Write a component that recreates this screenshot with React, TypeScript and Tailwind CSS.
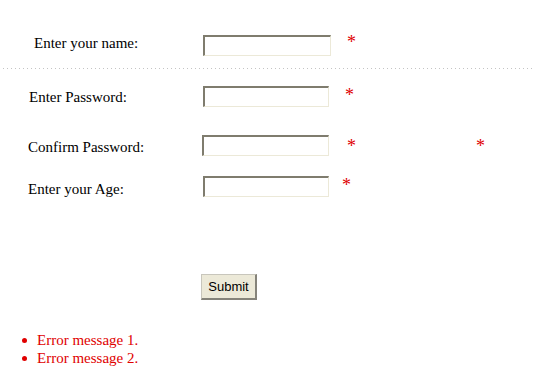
import React from 'react';

function Star({ className = '' }: { className?: string }) {
  return <span className={`text-[18px] leading-[15px] text-[#e00000] ${className}`}>*</span>;
}

function Field({ type = 'text' }: { type?: string }) {
  return (
    <input
      type={type}
      className="h-[21px] w-full border-t-2 border-l-2 border-r border-b border-t-[#7f7c6e] border-l-[#7f7c6e] border-r-[#ece9d8] border-b-[#ece9d8] bg-white outline-none"
    />
  );
}

const errors = ['Error message 1.', 'Error message 2.'];

export default function App() {
  return (
    <div className="w-[535px] h-[392px] bg-white text-black font-['Liberation_Serif','Times_New_Roman',serif] text-[15px]">
      <div className="pt-[35px]">
        {/* name */}
        <div className="flex items-start h-[21px]">
          <span className="w-[203px] pl-[34px] leading-[17px]">Enter your name:</span>
          <div className="w-[128px]">
            <Field />
          </div>
          <Star className="ml-[16px]" />
        </div>

        <div className="mt-[12px] h-px w-full bg-[linear-gradient(to_right,#c4c4c4_1px,transparent_1px)] bg-[length:4px_1px] bg-[position:3px_0]" />

        {/* password */}
        <div className="mt-[17px] flex items-start h-[21px]">
          <span className="w-[203px] pl-[29px] mt-[3px] leading-[17px]">Enter Password:</span>
          <div className="w-[126px]">
            <Field type="password" />
          </div>
          <Star className="ml-[16px] mt-[2px]" />
        </div>

        {/* confirm */}
        <div className="mt-[28px] flex items-start h-[21px]">
          <span className="w-[202px] pl-[28px] mt-[4px] leading-[17px]">Confirm Password:</span>
          <div className="w-[127px]">
            <Field type="password" />
          </div>
          <Star className="ml-[18px] mt-[4px]" />
          <Star className="ml-[120px] mt-[4px]" />
        </div>

        {/* age */}
        <div className="mt-[20px] flex items-start h-[21px]">
          <span className="w-[203px] pl-[28px] mt-[5px] leading-[17px]">Enter your Age:</span>
          <div className="w-[126px]">
            <Field />
          </div>
          <Star className="ml-[13px] mt-[2px]" />
        </div>

        <div className="mt-[77px] pl-[201px]">
          <button
            type="button"
            className="h-[26px] w-[56px] bg-[#ece9d8] border-t border-l border-b-2 border-r-2 border-t-[#c8c6bc] border-l-[#c8c6bc] border-b-[#85837a] border-r-[#85837a] font-['Liberation_Sans',Arial,sans-serif] text-[13px] leading-none text-black"
          >
            Submit
          </button>
        </div>

        <ul className="mt-[31px] text-[#e00000] leading-[18px]">
          {errors.map((msg) => (
            <li key={msg} className="flex items-center">
              <span className="ml-[22px] mr-[10px] mt-[1px] h-[5px] w-[5px] rounded-full bg-[#e00000]" />
              {msg}
            </li>
          ))}
        </ul>
      </div>
    </div>
  );
}
